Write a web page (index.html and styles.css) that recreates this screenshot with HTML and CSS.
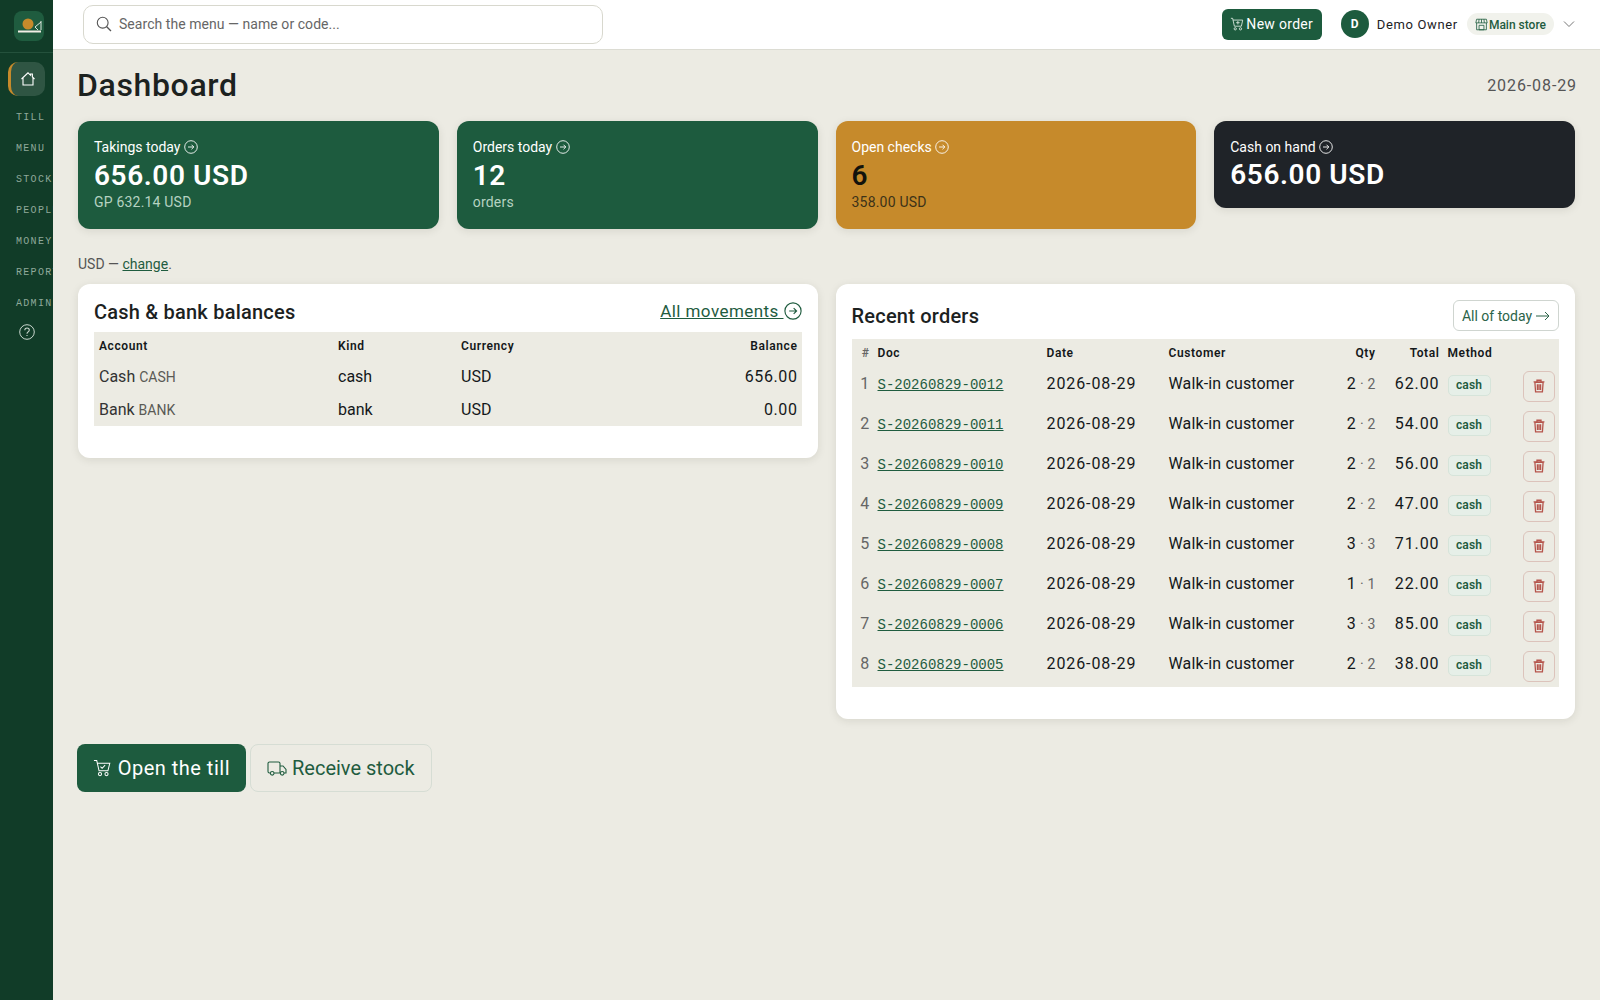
FILE: index.html
```html
<!DOCTYPE html>
<html lang="en">
<head>
<meta charset="utf-8">
<title>Dashboard</title>
<link rel="stylesheet" href="styles.css">
</head>
<body>
<svg class="defs" width="0" height="0" aria-hidden="true">
  <symbol id="arrow" viewBox="0 0 16 16"><circle cx="8" cy="8" r="7.200" fill="none" stroke="currentColor"/><path d="M4.600 8h6.600M8.600 5.400 11.200 8l-2.600 2.600" fill="none" stroke="currentColor"/></symbol>
  <symbol id="trash" viewBox="0 0 16 16"><path d="M1.800 3.300h12.400M5.700 3V1.400h4.600V3M3.300 3.800l.8 11h7.800l.8-11zM6.200 6v6.500M8 6v6.500M9.800 6v6.500" fill="none" stroke="currentColor" stroke-width="1.500"/></symbol>
</svg>
<div class="app">
  <aside class="sidebar">
    <div class="logo-wrap">
      <div class="logo">
        <svg width="30" height="30" viewBox="0 0 30 30"><circle cx="14" cy="13" r="5.500" fill="#c68a2b"/><path d="M4 20.500h23" stroke="#f2efe6" stroke-width="2"/><path d="M27 10v9M27 11l-6 5 3 3" fill="none" stroke="#dfe7df" stroke-width="1"/></svg>
      </div>
    </div>
    <nav class="nav">
      <a class="nav-home"><svg width="16" height="16" viewBox="0 0 16 16"><path d="M1.500 8 8 1.800l2.600 2.500V3h1.800v3l2.100 2M3 7v7h10V7" fill="none" stroke="#fff" stroke-width="1.100"/></svg></a>
      <span class="nav-label">TILL</span>
      <span class="nav-label">MENU</span>
      <span class="nav-label">STOCK</span>
      <span class="nav-label">PEOPLE</span>
      <span class="nav-label">MONEY</span>
      <span class="nav-label">REPORTS</span>
      <span class="nav-label">ADMIN</span>
      <a class="nav-help"><svg width="16" height="16" viewBox="0 0 16 16"><circle cx="8" cy="8" r="7.300" fill="none" stroke="currentColor"/><path d="M5.800 6.200c0-3 4.500-2.800 4.500-.1 0 1.800-2.300 1.800-2.300 3.600M8 11v1" fill="none" stroke="currentColor" stroke-width="1.100"/></svg></a>
    </nav>
  </aside>
  <div class="content">
    <header class="topbar">
      <label class="search">
        <svg width="16" height="16" viewBox="0 0 16 16"><circle cx="6.700" cy="6.700" r="5.400" fill="none" stroke="#555" stroke-width="1.100"/><path d="m10.700 10.700 4.300 4.300" stroke="#555" stroke-width="1.300"/></svg>
        <span>Search the menu — name or code...</span>
      </label>
      <div class="top-actions">
        <a class="new-order"><svg width="14" height="14" viewBox="0 0 16 16"><path d="M1 1.500h2l2 9h8l1.500-7H3.500" fill="none" stroke="#dbe9e0"/><circle cx="6" cy="13.500" r="1.300" fill="none" stroke="#dbe9e0"/><circle cx="12" cy="13.500" r="1.300" fill="none" stroke="#dbe9e0"/><path d="M7 6.500h4M9 4.500v4" stroke="#dbe9e0"/></svg>New order</a>
        <span class="avatar">D</span>
        <span class="user-name">Demo Owner</span>
        <span class="store"><svg width="13" height="13" viewBox="0 0 16 16"><path d="M2 1.500h12l1 4.500H1zM2 6v8.500h12V6M5 1.500 4.500 6M8 1.500V6M11 1.500l.5 4.500M5 9h6v5.500H5z" fill="none" stroke="#1f5c3f"/></svg>Main store</span>
        <svg class="chev" width="12" height="12" viewBox="0 0 12 12"><path d="M1 3.500 6 8.500l5-5" fill="none" stroke="#777"/></svg>
      </div>
    </header>
    <main class="main">
      <div class="page-head">
        <h1>Dashboard</h1>
        <span class="page-date">2026-08-29</span>
      </div>
      <section class="stats">
        <a class="stat stat-green">
          <span class="stat-title">Takings today <svg class="i14"><use href="#arrow"/></svg></span>
          <strong>656.00 USD</strong>
          <small class="sub-light">GP 632.14 USD</small>
        </a>
        <a class="stat stat-green">
          <span class="stat-title">Orders today <svg class="i14"><use href="#arrow"/></svg></span>
          <strong>12</strong>
          <small class="sub-light">orders</small>
        </a>
        <a class="stat stat-amber">
          <span class="stat-title">Open checks <svg class="i14"><use href="#arrow"/></svg></span>
          <strong>6</strong>
          <small>358.00 USD</small>
        </a>
        <a class="stat stat-dark">
          <span class="stat-title">Cash on hand <svg class="i14"><use href="#arrow"/></svg></span>
          <strong>656.00 USD</strong>
        </a>
      </section>
      <p class="currency-note">USD — <a>change</a>.</p>
      <section class="panels">
        <div class="panel panel-left">
          <div class="panel-head">
            <h2>Cash &amp; bank balances</h2>
            <span class="more"><a>All movements&nbsp;</a><svg class="i16"><use href="#arrow"/></svg></span>
          </div>
          <table class="tbl tbl-bal">
            <thead><tr><th class="c-acc">Account</th><th class="c-kind">Kind</th><th class="c-cur">Currency</th><th class="num">Balance</th></tr></thead>
            <tbody>
              <tr><td><span class="acc">Cash</span> <span class="code">CASH</span></td><td>cash</td><td>USD</td><td class="num">656.00</td></tr>
              <tr><td><span class="acc">Bank</span> <span class="code">BANK</span></td><td>bank</td><td>USD</td><td class="num">0.00</td></tr>
            </tbody>
          </table>
        </div>
        <div class="panel panel-right">
          <div class="panel-head panel-head-r">
            <h2>Recent orders</h2>
            <a class="outline-btn">All of today<svg class="arr" width="14" height="10" viewBox="0 0 14 10"><path d="M0 5h13M9 1l4 4-4 4" fill="none" stroke="#2b6348"/></svg></a>
          </div>
          <table class="tbl tbl-orders">
            <thead><tr><th class="c-no idx">#</th><th class="c-doc">Doc</th><th class="c-date">Date</th><th class="c-cust">Customer</th><th class="c-qty num">Qty</th><th class="c-tot num">Total</th><th class="c-meth">Method</th><th class="c-del"></th></tr></thead>
            <tbody>
              <tr><td class="idx">1</td><td><a class="doc">S-20260829-0012</a></td><td class="dt">2026-08-29</td><td>Walk-in customer</td><td class="num">2 <span class="dot">· 2</span></td><td class="num dt">62.00</td><td class="meth"><span class="badge">cash</span></td><td class="del"><button class="del-btn"><svg class="i14"><use href="#trash"/></svg></button></td></tr>
              <tr><td class="idx">2</td><td><a class="doc">S-20260829-0011</a></td><td class="dt">2026-08-29</td><td>Walk-in customer</td><td class="num">2 <span class="dot">· 2</span></td><td class="num dt">54.00</td><td class="meth"><span class="badge">cash</span></td><td class="del"><button class="del-btn"><svg class="i14"><use href="#trash"/></svg></button></td></tr>
              <tr><td class="idx">3</td><td><a class="doc">S-20260829-0010</a></td><td class="dt">2026-08-29</td><td>Walk-in customer</td><td class="num">2 <span class="dot">· 2</span></td><td class="num dt">56.00</td><td class="meth"><span class="badge">cash</span></td><td class="del"><button class="del-btn"><svg class="i14"><use href="#trash"/></svg></button></td></tr>
              <tr><td class="idx">4</td><td><a class="doc">S-20260829-0009</a></td><td class="dt">2026-08-29</td><td>Walk-in customer</td><td class="num">2 <span class="dot">· 2</span></td><td class="num dt">47.00</td><td class="meth"><span class="badge">cash</span></td><td class="del"><button class="del-btn"><svg class="i14"><use href="#trash"/></svg></button></td></tr>
              <tr><td class="idx">5</td><td><a class="doc">S-20260829-0008</a></td><td class="dt">2026-08-29</td><td>Walk-in customer</td><td class="num">3 <span class="dot">· 3</span></td><td class="num dt">71.00</td><td class="meth"><span class="badge">cash</span></td><td class="del"><button class="del-btn"><svg class="i14"><use href="#trash"/></svg></button></td></tr>
              <tr><td class="idx">6</td><td><a class="doc">S-20260829-0007</a></td><td class="dt">2026-08-29</td><td>Walk-in customer</td><td class="num">1 <span class="dot">· 1</span></td><td class="num dt">22.00</td><td class="meth"><span class="badge">cash</span></td><td class="del"><button class="del-btn"><svg class="i14"><use href="#trash"/></svg></button></td></tr>
              <tr><td class="idx">7</td><td><a class="doc">S-20260829-0006</a></td><td class="dt">2026-08-29</td><td>Walk-in customer</td><td class="num">3 <span class="dot">· 3</span></td><td class="num dt">85.00</td><td class="meth"><span class="badge">cash</span></td><td class="del"><button class="del-btn"><svg class="i14"><use href="#trash"/></svg></button></td></tr>
              <tr><td class="idx">8</td><td><a class="doc">S-20260829-0005</a></td><td class="dt">2026-08-29</td><td>Walk-in customer</td><td class="num">2 <span class="dot">· 2</span></td><td class="num dt">38.00</td><td class="meth"><span class="badge">cash</span></td><td class="del"><button class="del-btn"><svg class="i14"><use href="#trash"/></svg></button></td></tr>
            </tbody>
          </table>
        </div>
      </section>
      <div class="cta">
        <a class="cta-btn cta-primary"><svg width="20" height="20" viewBox="0 0 20 20"><path d="M1 2h3l2.500 11h9.500l2-8H5M8 8.500l1.800 1.800L13 7" fill="none" stroke="#fff" stroke-width="1.100"/><circle cx="7.500" cy="16.500" r="1.700" fill="none" stroke="#fff" stroke-width="1.100"/><circle cx="14.500" cy="16.500" r="1.700" fill="none" stroke="#fff" stroke-width="1.100"/></svg>Open the till</a>
        <a class="cta-btn cta-ghost"><svg width="20" height="20" viewBox="0 0 20 20"><path d="M3.500 15H2.500A1.500 1.500 0 0 1 1 13.500v-8A1.500 1.500 0 0 1 2.500 4h9A1.500 1.500 0 0 1 13 5.500V15H7M13 8h3l3 3.500V15h-2M13 15h.5" fill="none" stroke="#1f5c3f" stroke-width="1.100"/><circle cx="5.200" cy="15.300" r="1.800" fill="none" stroke="#1f5c3f" stroke-width="1.100"/><circle cx="15.200" cy="15.300" r="1.800" fill="none" stroke="#1f5c3f" stroke-width="1.100"/></svg>Receive stock</a>
      </div>
    </main>
  </div>
</div>
</body>
</html>
```
FILE: styles.css
```css
* { box-sizing: border-box; }
html, body { margin: 0; height: 100%; }
body { font-family: Roboto, "Noto Sans", "Liberation Sans", sans-serif; color: #1c221f; background: #ecebe3; overflow: hidden; }
a { color: inherit; }
.defs { position: absolute; }
.i14 { width: 14px; height: 14px; display: inline-block; vertical-align: -2px; }
.i16 { width: 18px; height: 18px; display: inline-block; vertical-align: -2px; }

.app { display: flex; height: 1000px; }
.sidebar { width: 53px; flex: none; background: #113c28; overflow: hidden; }
.logo-wrap { height: 53px; padding: 11px 14px 0; border-bottom: 1px solid #24513c; }
.logo { width: 30px; height: 30px; border-radius: 8px; background: #1f5c3f; }
.logo svg { display: block; }
.nav { display: flex; flex-direction: column; padding-top: 9px; }
.nav-home { width: 37px; height: 34px; margin-left: 8px; margin-bottom: 6px; border-radius: 10px; background: #2f5543; border-left: 3px solid #c68a2b; display: flex; align-items: center; justify-content: center; }
.nav-label { height: 31px; padding-left: 16px; font: 10px/31px "Liberation Mono", monospace; letter-spacing: 1.300px; color: #8fa99a; white-space: nowrap; }
.nav-help { margin: 5px 0 0 19px; color: #c9d6cd; line-height: 0; }

.content { flex: 1; min-width: 0; display: flex; flex-direction: column; }
.topbar { height: 50px; flex: none; background: #fff; border-bottom: 1px solid #dcdcd3; display: flex; align-items: center; justify-content: space-between; padding: 0 24px 1px 30px; }
.search { width: 520px; height: 39px; border: 1px solid #d8d8ce; border-radius: 10px; display: flex; align-items: center; gap: 7px; padding: 0 12px; font-size: 14px; color: #666; letter-spacing: .05px; }
.top-actions { display: flex; align-items: center; font-size: 14px; }
.new-order { width: 100px; height: 31px; background: #1d5b3e; color: #fff; border-radius: 6px; display: flex; align-items: center; justify-content: center; gap: 2px; font-size: 14px; font-weight: 400; letter-spacing: .3px; }
.avatar { width: 28px; height: 28px; margin-left: 19px; border-radius: 50%; background: #1d5b3e; color: #fff; font-size: 12px; font-weight: 700; display: flex; align-items: center; justify-content: center; }
.user-name { margin-left: 8px; font-size: 13px; font-weight: 400; letter-spacing: .65px; }
.store { margin-left: 9px; height: 22px; padding: 1px 8px 0; border-radius: 11px; background: #f1f2ec; color: #1f5c3f; font-size: 12px; font-weight: 500; display: flex; align-items: center; gap: 1px; }
.chev { margin-left: 9px; margin-right: 1px; }

.main { flex: 1; padding: 0 25px 0 25px; }
.page-head { height: 71px; display: flex; align-items: center; justify-content: space-between; padding-bottom: 1px; }
h1 { margin: 0 0 0 -1px; font-size: 32px; font-weight: 500; letter-spacing: .65px; color: #1c221f; }
.page-date { font-size: 16px; color: #555; letter-spacing: .9px; margin-right: -2px; }

.stats { display: grid; grid-template-columns: repeat(4, 1fr); gap: 18px; align-items: start; }
.stat { display: flex; flex-direction: column; padding: 16px; border-radius: 12px; color: #fff; box-shadow: 0 2px 8px rgba(40,40,20,.1); }
.stat-title { font-size: 14px; line-height: 20px; }
.stat strong { font-size: 28px; line-height: 36px; margin-top: 1px; font-weight: 600; letter-spacing: .6px; }
.stat small { font-size: 14px; line-height: 20px; margin-top: -2px; letter-spacing: .2px; }
.stat-dark strong { margin-top: 0; }
.sub-light { color: #b5d2c1; }
.stat-green { background: #1d5b3e; height: 108px; }
.stat-amber { background: #c68a2b; height: 108px; }
.stat-amber strong { color: #12120c; }
.stat-amber small { color: #3c3218; }
.stat-dark { background: #1f2328; height: 87px; }

.currency-note { margin: 25px 0 0; height: 20px; font-size: 14px; line-height: 20px; color: #555; }
.currency-note a { color: #1f5c3f; text-decoration: underline; }

.panels { margin-top: 10px; display: grid; grid-template-columns: 1fr 1fr; gap: 18px; align-items: start; }
.panel { background: #fff; border-radius: 12px; padding: 16px; box-shadow: 0 2px 8px rgba(40,40,20,.1); }
.panel-left { height: 174px; }
.panel-right { height: 435px; }
.panel-head { height: 24px; margin-bottom: 8px; display: flex; align-items: center; justify-content: space-between; }
.panel-head-r { height: 31px; }
h2 { margin: 0; font-size: 20px; font-weight: 500; letter-spacing: .22px; color: #1c221f; }
.more { font-size: 17px; font-weight: 400; letter-spacing: .45px; color: #1f5c3f; display: flex; align-items: center; gap: 0; padding-bottom: 2px; }
.more a { text-decoration: underline; }
.outline-btn { height: 31px; width: 106px; border: 1px solid #cfd5d0; border-radius: 6px; color: #2b6348; font-size: 14px; display: flex; align-items: center; justify-content: center; gap: 4px; white-space: pre; }

.tbl { width: 100%; border-collapse: collapse; table-layout: fixed; background: #ecebe3; font-size: 16px; color: #14181a; }
.tbl th { font-size: 12px; font-weight: 600; letter-spacing: .6px; text-align: left; padding: 0 4px 2px; color: #14181a; }
.tbl td { padding: 0 4px 2px; white-space: nowrap; }
.tbl .num { text-align: right; }
.tbl-bal thead tr { height: 29px; }
.tbl-bal tbody tr { height: 32.500px; }
.tbl-bal th:first-child, .tbl-bal td:first-child { padding-left: 5px; }
.tbl-bal tr + tr td { padding-bottom: 0; }
.tbl-bal .num { letter-spacing: .6px; }
.c-acc { width: 240px; }
.c-kind { width: 123px; }
.c-cur { width: 180px; }
.acc { color: #333; }
.code { font-size: 14px; color: #5a5a55; }

.tbl-orders thead tr { height: 28px; }
.tbl-orders tbody tr { height: 40px; }
.tbl-orders th { padding-bottom: 1px; }
.tbl-orders td { padding-bottom: 8px; letter-spacing: .15px; }
.tbl-orders td.dt { letter-spacing: .9px; }
.c-no { width: 22px; }
.c-doc { width: 169px; }
.c-date { width: 122px; }
.c-cust { width: 151px; }
.c-qty { width: 64px; }
.c-tot { width: 64px; }
.c-meth { width: 66px; }
.tbl .idx { text-align: right; color: #666; }
.doc { font: 14px "Liberation Mono", monospace; letter-spacing: 0; color: #1f5c3f; text-decoration: underline; }
.dot { font-size: 14px; color: #666; }
.tbl-orders td.meth { padding-bottom: 4px; }
.badge { display: inline-block; height: 21px; width: 43px; text-align: center; border: 1px solid #d6e4da; border-radius: 5px; background: #e6efe8; color: #1f5c3f; font-size: 12px; line-height: 19px; font-weight: 600; }
.tbl-orders td.del { text-align: right; padding-bottom: 2px; }
.del-btn { width: 32px; height: 31px; padding: 0; margin-right: 0; border: 1px solid #dcc3bb; border-radius: 6px; background: transparent; color: #b5554c; display: inline-flex; align-items: center; justify-content: center; vertical-align: middle; }

.cta { margin-top: 25px; display: flex; gap: 4px; }
.cta-btn { height: 48px; padding: 0 16px; border-radius: 8px; font-size: 20px; display: flex; align-items: center; white-space: nowrap; }
.cta-primary { background: #1d5b3e; color: #fff; margin-left: -1px; font-weight: 400; gap: 6px; letter-spacing: .5px; width: 169px; }
.cta-ghost { border: 1px solid #d6ddd4; color: #1f5c3f; gap: 5px; }
```
